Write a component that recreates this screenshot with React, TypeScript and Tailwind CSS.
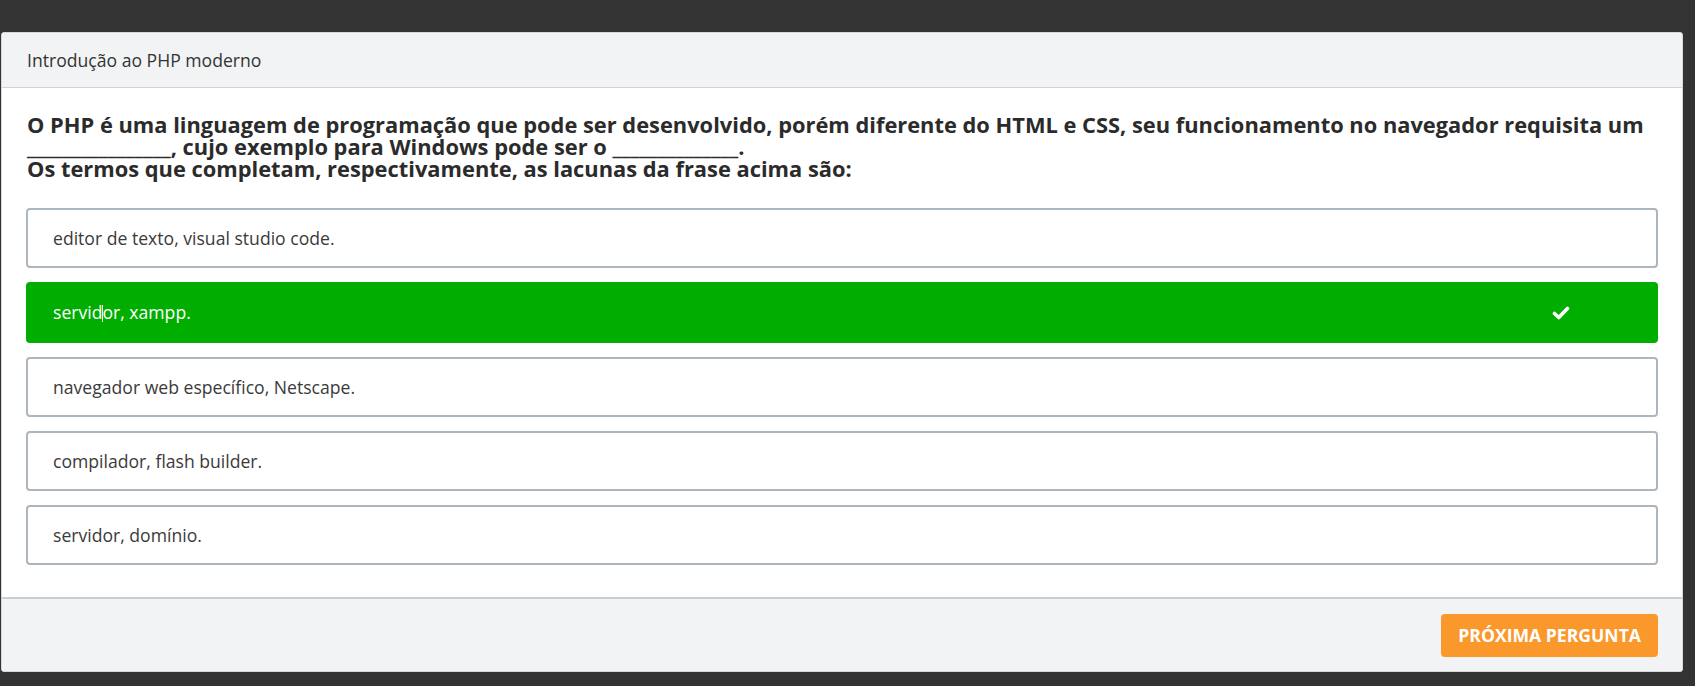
import React from "react";

const options = [
  { id: 1, text: "editor de texto, visual studio code.", correct: false },
  { id: 2, text: "servidor, xampp.", correct: true },
  { id: 3, text: "navegador web específico, Netscape.", correct: false },
  { id: 4, text: "compilador, flash builder.", correct: false },
  { id: 5, text: "servidor, domínio.", correct: false },
];

function CheckIcon() {
  return (
    <svg width="18" height="14" viewBox="0 0 18 14" fill="none">
      <path
        d="M2.5 7.5L6.8 11.5L15.5 2.5"
        stroke="white"
        strokeWidth="3.6"
        strokeLinecap="round"
        strokeLinejoin="round"
      />
    </svg>
  );
}

function OptionRow({ text, correct }: { text: string; correct: boolean }) {
  if (correct) {
    // cursor I-beam sits between "servid" and "or" in the screenshot
    const cut = text.indexOf("or,");
    return (
      <div className="flex h-[61px] items-center justify-between rounded-[4px] bg-[#00ae00] pl-[27px] pr-[88px] text-[17.6px] text-white">
        <span>
          {text.slice(0, cut)}
          <span className="relative inline-block w-0">
            <span className="absolute left-0 top-[-14px] h-[17px] w-px bg-white" />
          </span>
          {text.slice(cut)}
        </span>
        <CheckIcon />
      </div>
    );
  }
  return (
    <div className="flex h-[60px] items-center rounded-[4px] border-2 border-[#adb5bd] pl-[25px] text-[17.6px] text-[#3a3a3a]">
      {text}
    </div>
  );
}

export default function App() {
  return (
    <div className="min-h-[686px] bg-[#333333] pt-[32px] font-['Open_Sans',sans-serif]">
      <div className="ml-[1px] w-[1682px] overflow-hidden rounded-[3px] border border-[#d6d8db] bg-white">
        <div className="flex h-[55px] items-center border-b border-[#cfd2d6] bg-[#f2f3f4] px-[25px] text-[17.6px] text-[#333]">
          Introdução ao PHP moderno
        </div>

        <div className="px-[24px] pb-[32px] pt-[26px]">
          <div className="text-[21.85px] font-bold leading-[22px] text-[#2b2b2b]">
            <div className="whitespace-nowrap px-[1px]">
              O PHP é uma linguagem de programação que pode ser desenvolvido, porém diferente do HTML e CSS, seu funcionamento no navegador requisita um
            </div>
            <div className="whitespace-nowrap px-[1px]">
              ________________, cujo exemplo para Windows pode ser o ______________.
            </div>
            <div className="whitespace-nowrap px-[1px]">
              Os termos que completam, respectivamente, as lacunas da frase acima são:
            </div>
          </div>

          <div className="mt-[28px] flex flex-col gap-[14px]">
            {options.map((o) => (
              <OptionRow key={o.id} text={o.text} correct={o.correct} />
            ))}
          </div>
        </div>

        <div className="flex h-[74px] items-start justify-end border-t-2 border-[#cbcdd1] bg-[#f2f3f4] pr-[24px] pt-[15px]">
          <button
            type="button"
            className="h-[43px] rounded-[4px] bg-[#fb982c] px-[17px] text-[17.6px] font-bold uppercase text-white"
          >
            Próxima pergunta
          </button>
        </div>
      </div>
    </div>
  );
}
